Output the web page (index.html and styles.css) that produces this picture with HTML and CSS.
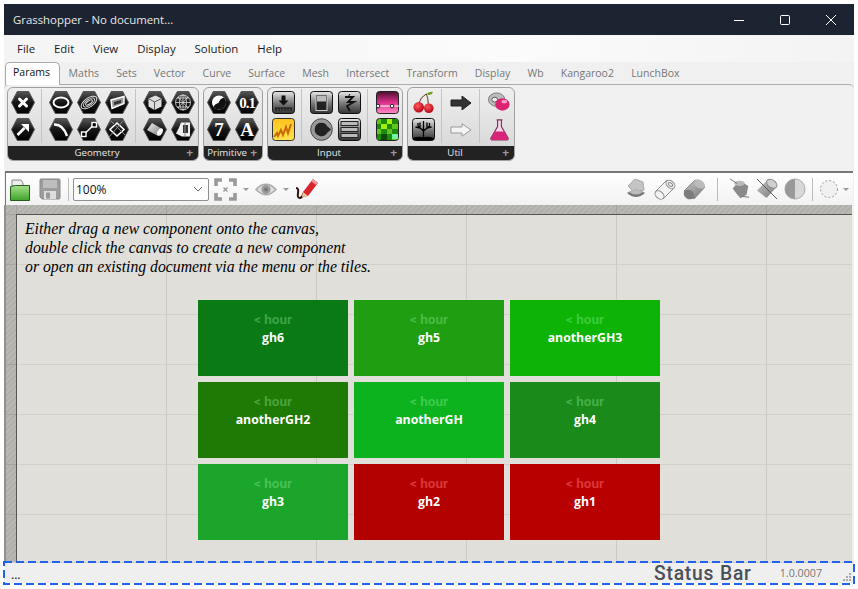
FILE: index.html
```html
<!DOCTYPE html>
<html lang="en">
<head>
  <meta charset="UTF-8">
  <title>Grasshopper - No document...</title>
  <link rel="stylesheet" href="styles.css">
</head>
<body>
  <svg class="defs" aria-hidden="true">
    <defs>
      <linearGradient id="hexFill" x1="0" y1="0" x2="0" y2="1">
        <stop offset="0" stop-color="#555"/><stop offset="0.5" stop-color="#161616"/><stop offset="1" stop-color="#000"/>
      </linearGradient>
      <linearGradient id="tileFill" x1="0" y1="0" x2="0" y2="1">
        <stop offset="0" stop-color="#e8e8e8"/><stop offset="0.55" stop-color="#777"/><stop offset="1" stop-color="#333"/>
      </linearGradient>
      <linearGradient id="pinkFill" x1="0" y1="0" x2="0" y2="1">
        <stop offset="0" stop-color="#4a1030"/><stop offset="0.5" stop-color="#e0308c"/><stop offset="1" stop-color="#ff8ac8"/>
      </linearGradient>
      <linearGradient id="yellowFill" x1="0" y1="0" x2="0" y2="1">
        <stop offset="0" stop-color="#ffc21c"/><stop offset="1" stop-color="#ffe24a"/>
      </linearGradient>
      <linearGradient id="pipeFill" x1="0" y1="0" x2="1" y2="1">
        <stop offset="0" stop-color="#eee"/><stop offset="1" stop-color="#777"/>
      </linearGradient>
      <linearGradient id="greyCyl" x1="0" y1="0" x2="1" y2="1">
        <stop offset="0" stop-color="#c8c8c8"/><stop offset="1" stop-color="#777"/>
      </linearGradient>
      <linearGradient id="folderFill" x1="0" y1="0" x2="0" y2="1">
        <stop offset="0" stop-color="#a6e08a"/><stop offset="1" stop-color="#3da12a"/>
      </linearGradient>
      <radialGradient id="cherryFill" cx="0.4" cy="0.35" r="0.7">
        <stop offset="0" stop-color="#ff5a5a"/><stop offset="1" stop-color="#b00010"/>
      </radialGradient>
      <symbol id="hex" viewBox="0 0 24 23">
        <path d="M6.3.5h11.4L23.5 11.5l-5.8 11H6.3L.5 11.5z" fill="url(#hexFill)" stroke="#555"/>
      </symbol>
      <symbol id="tile" viewBox="0 0 23 23">
        <rect x=".5" y=".5" width="22" height="22" rx="3" fill="url(#tileFill)" stroke="#111"/>
      </symbol>
    </defs>
  </svg>

  <div class="window">
    <header class="titlebar">
      <span class="title">Grasshopper - No document...</span>
      <div class="win-controls">
        <svg width="12" height="12" viewBox="0 0 12 12"><path d="M1 6.5h10" stroke="#fff"/></svg>
        <svg width="12" height="12" viewBox="0 0 12 12"><rect x="1.5" y="1.5" width="9" height="9" rx="1" fill="none" stroke="#fff"/></svg>
        <svg width="12" height="12" viewBox="0 0 12 12"><path d="M1 1l10 10M11 1L1 11" stroke="#fff"/></svg>
      </div>
    </header>

    <nav class="menubar">
      <span>File</span><span>Edit</span><span>View</span><span>Display</span><span>Solution</span><span>Help</span>
    </nav>

    <div class="tabs">
      <span class="tab active">Params</span>
      <span class="tab">Maths</span>
      <span class="tab">Sets</span>
      <span class="tab">Vector</span>
      <span class="tab">Curve</span>
      <span class="tab">Surface</span>
      <span class="tab">Mesh</span>
      <span class="tab">Intersect</span>
      <span class="tab">Transform</span>
      <span class="tab">Display</span>
      <span class="tab">Wb</span>
      <span class="tab">Kangaroo2</span>
      <span class="tab">LunchBox</span>
    </div>

    <section class="ribbon">
      <div class="panel">
        <div class="panel-body">
          <div class="group">
            <div class="cell"><svg class="hex" viewBox="0 0 24 23"><use href="#hex"/><path d="M8.5 8l7 7M15.5 8l-7 7" stroke="#fff" stroke-width="3" stroke-linecap="round"/></svg></div>
            <div class="cell"><svg class="hex" viewBox="0 0 24 23"><use href="#hex"/><path d="M6.5 17l7-7" stroke="#fff" stroke-width="2.6"/><path d="M10 6h8v8z" fill="#fff"/></svg></div>
          </div>
          <div class="group cols-3">
            <div class="cell"><svg class="hex" viewBox="0 0 24 23"><use href="#hex"/><ellipse cx="12" cy="11.5" rx="7.5" ry="5" fill="none" stroke="#fff" stroke-width="2"/></svg></div>
            <div class="cell"><svg class="hex" viewBox="0 0 24 23"><use href="#hex"/><g fill="none" stroke="#ddd" transform="rotate(-35 12 11.5)"><ellipse cx="12" cy="11.5" rx="9" ry="4.5"/><ellipse cx="12" cy="11.5" rx="6.5" ry="3"/><ellipse cx="12" cy="11.5" rx="4" ry="1.5"/></g></svg></div>
            <div class="cell"><svg class="hex" viewBox="0 0 24 23"><use href="#hex"/><path d="M6 9l13-3.5v7l-12 5z" fill="#999" stroke="#fff" stroke-width="1.4"/><path d="M9 11l7-2v3l-7 2z" fill="#333"/></svg></div>
            <div class="cell"><svg class="hex" viewBox="0 0 24 23"><use href="#hex"/><path d="M5 6.5Q14 6 18 18" fill="none" stroke="#fff" stroke-width="2.4"/></svg></div>
            <div class="cell"><svg class="hex" viewBox="0 0 24 23"><use href="#hex"/><path d="M7 16.5l10-10" stroke="#fff" stroke-width="1.4"/><rect x="4.5" y="14" width="4.5" height="4.5" fill="#000" stroke="#fff" stroke-width="1.4"/><rect x="15" y="4.5" width="4.5" height="4.5" fill="#000" stroke="#fff" stroke-width="1.4"/></svg></div>
            <div class="cell"><svg class="hex" viewBox="0 0 24 23"><use href="#hex"/><path d="M12 5l7 6.5-7 6.5-7-6.5z" fill="none" stroke="#fff" stroke-width="1.6"/><path d="M6 3l14 14M18 3L4 19" stroke="#888"/></svg></div>
          </div>
          <div class="group cols-2">
            <div class="cell"><svg class="hex" viewBox="0 0 24 23"><use href="#hex"/><path d="M5.5 7.5l7-3 6 3v8l-7 3.5-6-3.5z" fill="#ddd"/><path d="M5.5 7.5l6 3.5 7-3.5M11.5 11v8" fill="none" stroke="#555"/></svg></div>
            <div class="cell"><svg class="hex" viewBox="0 0 24 23"><use href="#hex"/><g fill="none" stroke="#ddd" stroke-width=".8"><circle cx="12" cy="11.5" r="7.5"/><ellipse cx="12" cy="11.5" rx="3.5" ry="7.5"/><path d="M4.5 11.5h15M6 7h12M6 16h12M12 4v15M7 6l10 11M17 6L7 17"/></g></svg></div>
            <div class="cell"><svg class="hex" viewBox="0 0 24 23"><use href="#hex"/><path d="M9 5l11 6.5L15 18 4 12z" fill="url(#pipeFill)"/><ellipse cx="17" cy="14" rx="2.5" ry="4" fill="#f4f4f4" transform="rotate(30 17 14)"/></svg></div>
            <div class="cell"><svg class="hex" viewBox="0 0 24 23"><use href="#hex"/><path d="M10 4.500h9v14h-8l-6-3q3-5 5-11z" fill="#eee"/><path d="M12 7h5v8h-5z" fill="#333"/><path d="M14 5v14" stroke="#888"/></svg></div>
          </div>
        </div>
        <div class="panel-foot"><span class="panel-name">Geometry</span><span class="plus">+</span></div>
      </div>

      <div class="panel">
        <div class="panel-body">
          <div class="group cols-2">
            <div class="cell"><svg class="hex" viewBox="0 0 24 23"><use href="#hex"/><circle cx="12" cy="11.5" r="7" fill="#fff"/><path d="M12.5 11c-1 3-3 5-5.500 5.500a7 7 0 0 1 10-10c.5 2-2 4-4.500 4.500z" fill="#111" transform="rotate(180 12 11.5)"/></svg></div>
            <div class="cell"><svg class="hex" viewBox="0 0 24 23"><use href="#hex"/><text x="12" y="16.5" class="hex-text small">0.1</text></svg></div>
            <div class="cell"><svg class="hex" viewBox="0 0 24 23"><use href="#hex"/><text x="12" y="18" class="hex-text">7</text></svg></div>
            <div class="cell"><svg class="hex" viewBox="0 0 24 23"><use href="#hex"/><text x="12" y="18" class="hex-text">A</text></svg></div>
          </div>
        </div>
        <div class="panel-foot"><span class="panel-name">Primitive</span><span class="plus">+</span></div>
      </div>

      <div class="panel">
        <div class="panel-body">
          <div class="group">
            <div class="cell"><svg class="tile" viewBox="0 0 23 23"><use href="#tile"/><path d="M9.5 4.500h4v5h3l-5 5-5-5h3z" fill="#111"/><path d="M3 17h17M4 17v3M7 17v3M10 17v3M13 17v3M16 17v3M19 17v3" stroke="#111"/></svg></div>
            <div class="cell"><svg class="tile" viewBox="0 0 23 23"><rect x=".5" y=".5" width="22" height="22" rx="3" fill="url(#yellowFill)" stroke="#333"/><path d="M2 19l3-4 1 3 3-6 2 5 3-8 2 6 3-9" fill="none" stroke="#c9690a" stroke-width="2"/></svg></div>
          </div>
          <div class="group cols-2">
            <div class="cell"><svg class="tile" viewBox="0 0 23 23"><use href="#tile"/><rect x="6" y="3.5" width="11" height="16" fill="#222" stroke="#ccc"/><rect x="7" y="4.5" width="9" height="6" fill="#bbb"/></svg></div>
            <div class="cell"><svg class="tile" viewBox="0 0 23 23"><use href="#tile"/><path d="M7 6h8l-5 5h6l-7 4 3 5" fill="none" stroke="#111" stroke-width="1.8"/><path d="M12 3l-2 3" stroke="#111"/></svg></div>
            <div class="cell"><svg class="tile" viewBox="0 0 24 24"><circle cx="12" cy="12" r="11.3" fill="#999" stroke="#444"/><path d="M12 5a7 7 0 1 0 6 10.500L22 12l-4-3.500A7 7 0 0 0 12 5z" fill="#222"/></svg></div>
            <div class="cell"><svg class="tile" viewBox="0 0 23 23"><use href="#tile"/><rect x="3" y="3.5" width="17" height="4" fill="#bbb" stroke="#222"/><rect x="3" y="9.5" width="17" height="4" fill="#bbb" stroke="#222"/><rect x="3" y="15.5" width="17" height="4" fill="#bbb" stroke="#222"/></svg></div>
          </div>
          <div class="group">
            <div class="cell"><svg class="tile" viewBox="0 0 23 23"><rect x=".5" y=".5" width="22" height="22" rx="3" fill="url(#pinkFill)" stroke="#222"/><path d="M0 15h23" stroke="#fff"/><circle cx="2" cy="15" r="1.8" fill="#fff" stroke="#222"/><circle cx="16" cy="15" r="1.8" fill="#fff" stroke="#222"/></svg></div>
            <div class="cell"><svg class="tile" viewBox="0 0 23 23"><rect x=".5" y=".5" width="22" height="22" rx="3" fill="#5ec51a" stroke="#222"/><path d="M5 1h6v5H5zM16 1h6v5h-6zM1 6h4v5H1zM11 6h5v5h-5zM5 11h6v5H5zM16 11h6v5h-6zM1 16h4v6H1zM11 16h5v6h-5z" fill="#1c8a0a"/><path d="M16 16h6v5h-6z" fill="#6ff7a6"/><path d="M5 16h6v6H5z" fill="#0a4c08"/><path d="M11 1h5v5h-5zM5 6h6v5H5z" fill="#a4f000"/></svg></div>
          </div>
        </div>
        <div class="panel-foot"><span class="panel-name">Input</span><span class="plus">+</span></div>
      </div>

      <div class="panel">
        <div class="panel-body">
          <div class="group">
            <div class="cell"><svg class="tile" viewBox="0 0 24 24"><path d="M7 13Q9 6 15 3M17 14Q17 8 15 3" fill="none" stroke="#5a3a10"/><path d="M15 3q4-3 7-2-2 5-7 2z" fill="#6aa020"/><circle cx="7" cy="17" r="5.5" fill="url(#cherryFill)"/><circle cx="17.5" cy="18" r="5" fill="url(#cherryFill)"/></svg></div>
            <div class="cell"><svg class="tile" viewBox="0 0 23 23"><rect x=".5" y=".5" width="22" height="22" rx="3" fill="url(#tileFill)" stroke="#111"/><path d="M1 22h21v-2q-6-2-9-1h-3q-5-1-9 1z" fill="#000"/><path d="M11.5 20v-9M11.5 13L6 8M11.5 13l6-5M8 10L3.500 9M8 10V4.500M15 10l4.500-1M15 10V4.500M11.5 11V3M6 8V5M17.5 8V5" stroke="#000" stroke-width="1.3" fill="none"/></svg></div>
          </div>
          <div class="group">
            <div class="cell"><svg class="icon" viewBox="0 0 22 14"><path d="M1 4h11V0l9 7-9 7v-4H1z" fill="#333" stroke="#222"/></svg></div>
            <div class="cell"><svg class="icon" viewBox="0 0 22 14"><path d="M1 4h11V.8L21 7l-9 6.200V10H1z" fill="#f4f4f4" stroke="#999"/></svg></div>
          </div>
          <div class="group">
            <div class="cell"><svg class="tile" viewBox="0 0 24 24"><ellipse cx="9" cy="9" rx="8.5" ry="7" fill="#bbb" stroke="#777"/><ellipse cx="7" cy="9" rx="3" ry="2.5" fill="#eee" stroke="#555"/><ellipse cx="15" cy="14" rx="7.5" ry="6.5" fill="#d9236f"/><ellipse cx="17" cy="11" rx="3" ry="2" fill="#f59cc4"/></svg></div>
            <div class="cell"><svg class="tile" viewBox="0 0 24 24"><path d="M9 2h6M10 2v7L3 21q-.5 2 2 2h14q2.500 0 2-2L14 9V2" fill="#f4d8e6" stroke="#7a3557" stroke-width="1.2"/><path d="M7 14h10l4 7q.5 2-2 2H5q-2.500 0-2-2z" fill="#d8257a"/></svg></div>
          </div>
        </div>
        <div class="panel-foot"><span class="panel-name">Util</span><span class="plus">+</span></div>
      </div>
    </section>

    <div class="toolbar">
      <svg class="tool" width="20" height="23" viewBox="0 0 20 23"><path d="M2 2h9l2 3v3H2z" fill="#eee" stroke="#888"/><path d="M.5 22.500V8.500l5-1h14v15z" fill="url(#folderFill)" stroke="#245d18"/></svg>
      <svg class="tool save" width="22" height="22" viewBox="0 0 22 22"><path d="M1 2q0-1 1-1h18q1 0 1 1v18q0 1-1 1H3l-2-2z" fill="#9c9c9c" stroke="#888"/><rect x="4" y="2" width="14" height="8" fill="#bdbdbd"/><rect x="5" y="13" width="12" height="8" fill="#ddd"/><rect x="7" y="14.5" width="4" height="6" fill="#999"/></svg>
      <span class="tool-sep"></span>
      <div class="combo"><span>100%</span><svg width="10" height="6" viewBox="0 0 10 6"><path d="M1 1l4 4 4-4" fill="none" stroke="#666"/></svg></div>
      <svg class="tool fit" width="23" height="23" viewBox="0 0 23 23"><path d="M2 8V2h6M15 2h6v6M21 15v6h-6M8 21H2v-6" fill="none" stroke="#999" stroke-width="3.6"/><path d="M9.5 9.5l4 4M13.5 9.5l-4 4" stroke="#999" stroke-width="1.4"/></svg>
      <span class="drop"></span>
      <svg class="tool" width="22" height="15" viewBox="0 0 22 15"><path d="M1 7.500Q11-3 21 7.500 11 18 1 7.500z" fill="#ddd" stroke="#aaa" stroke-width="1.5"/><circle cx="11" cy="7.5" r="4.5" fill="#9a9a9a"/><circle cx="11" cy="7.5" r="2" fill="#777"/></svg>
      <span class="drop"></span>
      <svg class="tool" width="23" height="22" viewBox="0 0 23 22"><path d="M1 10q3 0 2 5-1 5 2 5 3-1 4-6" fill="none" stroke="#331010" stroke-width="2"/><path d="M8 14L18 1l5 4-10 13-6 1z" fill="#d8262c"/><path d="M18 1l5 4-2 2-5-4z" fill="#f39a9a"/><path d="M8 14l5 4-6 1z" fill="#e8c890"/></svg>

      <div class="tool-right">
        <svg class="tool" width="20" height="23" viewBox="0 0 20 23"><path d="M2 8L9 1l8 3 1 8-9 3z" fill="#c4c4c4" stroke="#aaa"/><path d="M1 15q9-7 18 0-9 8-18 0z" fill="#777"/><path d="M3 14q7-5 14 0-7 5-14 0z" fill="#bbb"/></svg>
        <svg class="tool pipe" width="23" height="23" viewBox="0 0 23 23"><g fill="#f4f4f4" stroke="#8a8a8a"><path d="M1 14L13 2l8 7L9 21z"/><ellipse cx="16.5" cy="6.5" rx="5" ry="3.5" transform="rotate(40 16.5 6.5)"/><ellipse cx="5.5" cy="17" rx="5" ry="3.5" transform="rotate(40 5.5 17)"/><ellipse cx="16.5" cy="6.5" rx="2.5" ry="1.5" transform="rotate(40 16.5 6.5)"/></g></svg>
        <svg class="tool" width="23" height="23" viewBox="0 0 23 23"><path d="M1 13L12 2l10 7-11 12z" fill="url(#greyCyl)" stroke="#888"/><ellipse cx="16.5" cy="6" rx="6" ry="4" fill="#bbb" transform="rotate(35 16.5 6)"/><ellipse cx="6" cy="16.5" rx="5.5" ry="4.5" fill="#7c7c7c" transform="rotate(35 6 16.5)"/></svg>
        <span class="tool-sep sep-wide"></span>
        <svg class="tool" width="20" height="22" viewBox="0 0 23 23"><path d="M3 11l8-9 10 6-2 10-7 4q-4-4-9-11z" fill="#8a8a8a"/><ellipse cx="11" cy="5" rx="6" ry="3" fill="#bbb"/><path d="M0 0l8 5M14 20l8 1" stroke="#666"/></svg>
        <svg class="tool" width="22" height="22" viewBox="0 0 23 23"><path d="M1 13L12 2l10 7-11 12z" fill="url(#greyCyl)"/><ellipse cx="16.5" cy="6" rx="6" ry="4" fill="#d0d0d0" stroke="#888" transform="rotate(35 16.5 6)"/><path d="M1 1l21 21" stroke="#555"/></svg>
        <svg class="tool" width="22" height="22" viewBox="0 0 23 23"><circle cx="11.5" cy="11.5" r="10.5" fill="#d8d8d8" stroke="#aaa"/><path d="M11.5 1a10.500 10.500 0 0 0 0 21z" fill="#999"/></svg>
        <span class="tool-sep"></span>
        <svg class="tool" width="20" height="20" viewBox="0 0 20 20"><circle cx="10" cy="10" r="8.5" fill="#f0f0f0" stroke="#999" stroke-dasharray="2 2"/></svg>
        <span class="drop"></span>
      </div>
    </div>

    <main class="canvas-frame">
      <div class="canvas">
        <p class="hint">
          Either drag a new component onto the canvas,<br>
          double click the canvas to create a new component<br>
          or open an existing document via the menu or the tiles.
        </p>
        <div class="tiles">
          <div class="doc doc-a"><span class="age">&lt; hour</span><span class="name">gh6</span></div>
          <div class="doc doc-b"><span class="age">&lt; hour</span><span class="name">gh5</span></div>
          <div class="doc doc-c"><span class="age">&lt; hour</span><span class="name">anotherGH3</span></div>
          <div class="doc doc-d"><span class="age">&lt; hour</span><span class="name">anotherGH2</span></div>
          <div class="doc doc-e"><span class="age">&lt; hour</span><span class="name">anotherGH</span></div>
          <div class="doc doc-f"><span class="age">&lt; hour</span><span class="name">gh4</span></div>
          <div class="doc doc-g"><span class="age">&lt; hour</span><span class="name">gh3</span></div>
          <div class="doc doc-h"><span class="age">&lt; hour</span><span class="name">gh2</span></div>
          <div class="doc doc-i"><span class="age">&lt; hour</span><span class="name">gh1</span></div>
        </div>
      </div>
    </main>

    <footer class="statusbar">
      <span class="status-dots">...</span>
      <span class="status-label">Status Bar</span>
      <span class="status-version">1.0.0007</span>
      <svg class="grip" width="10" height="10" viewBox="0 0 10 10"><path d="M7 1h2v2H7zM4 4h2v2H4zM7 4h2v2H7zM1 7h2v2H1zM4 7h2v2H4zM7 7h2v2H7z" fill="#aaa"/></svg>
      <svg class="status-outline" width="852" height="24" viewBox="0 0 852 24"><rect x="1" y="1" width="850" height="22" fill="none" stroke="#1f63ee" stroke-width="2" stroke-dasharray="8 4"/></svg>
    </footer>
  </div>
</body>
</html>
```

FILE: styles.css
```css
html, body {
  margin: 0;
  height: 100%;
  overflow: hidden;
}

body {
  background: #fff;
  font-family: "Open Sans", "Noto Sans", sans-serif;
  font-size: 11.4px;
  color: #111;
}

.defs {
  display: block;
  width: 0;
  height: 0;
}

.window {
  display: flex;
  flex-direction: column;
  width: 850px;
  height: 579px;
  margin: 4px 0 0 4px;
  background: #f0f0f0;
}

/* title bar */
.titlebar {
  display: flex;
  align-items: center;
  justify-content: space-between;
  flex: none;
  height: 31px;
  padding-left: 9px;
  background: #1c2431;
  color: #e8e8e8;
}

.win-controls {
  display: flex;
  gap: 34px;
  margin-right: 17px;
}

/* menu */
.menubar {
  display: flex;
  align-items: center;
  gap: 19px;
  flex: none;
  height: 27px;
  padding-left: 13px;
  background: linear-gradient(to right, #f4f4f4, #fbfbfb 60%, #f3f3f3);
  color: #1a1a1a;
}

/* tabs */
.tabs {
  display: flex;
  flex: none;
  height: 22px;
  padding-left: 1px;
  color: #777;
  font-size: 10.5px;
}

.tab {
  padding: 4px 8.6px 0;
}

.tab.active {
  position: relative;
  z-index: 1;
  box-sizing: border-box;
  height: 23px;
  padding: 2px 9px 0 7px;
  background: #fff;
  border: 1px solid #aaa;
  border-bottom: none;
  border-radius: 5px 5px 0 0;
  color: #111;
}

/* ribbon */
.ribbon {
  display: flex;
  align-items: flex-start;
  gap: 4px;
  flex: none;
  box-sizing: border-box;
  height: 87px;
  padding: 2px 0 0 3px;
  border-top: 1px solid #aaa;
  border-radius: 5px 5px 0 0;
}

.panel {
  border: 1px solid #a0a0a0;
  border-radius: 6px;
  background: linear-gradient(#efefef, #d4d4d4);
  overflow: hidden;
}

.panel-body {
  display: flex;
  padding: 1px 1px 3px 1px;
}

.group {
  display: grid;
  grid-template-columns: 28px;
  grid-auto-rows: 27px;
}

.group.cols-2 {
  grid-template-columns: repeat(2, 28px);
}

.group.cols-3 {
  grid-template-columns: repeat(3, 28px);
}

.group + .group {
  margin-left: 4px;
  padding-left: 5px;
  border-left: 1px solid #c4c4c4;
}

.cell {
  display: flex;
  align-items: center;
  justify-content: center;
}

.hex {
  width: 24px;
  height: 23px;
}

.tile {
  width: 23px;
  height: 23px;
}

.icon {
  width: 22px;
  height: 14px;
}

.hex-text {
  fill: #fff;
  font-family: "Liberation Serif", serif;
  font-weight: bold;
  font-size: 19px;
  text-anchor: middle;
}

.hex-text.small {
  font-size: 15px;
  letter-spacing: -1px;
}

.panel-foot {
  display: flex;
  align-items: center;
  height: 13px;
  padding: 0 5px 1px 0;
  background: #222;
  color: #e8e8e8;
  font-size: 9.7px;
  line-height: 13px;
}

.panel-name {
  flex: 1;
  text-align: center;
}

.plus {
  color: #999;
  font-weight: bold;
  font-size: 12px;
}

/* toolbar */
.toolbar {
  display: flex;
  align-items: center;
  flex: none;
  box-sizing: border-box;
  height: 34px;
  margin: 0 1px;
  padding-left: 4px;
  border-top: 2px solid #777;
  border-left: 1px solid #777;
  background: linear-gradient(#fff, #f2f2f2);
}

.tool {
  flex: none;
}

.save {
  margin-left: 9px;
}

.tool-sep {
  flex: none;
  width: 1px;
  height: 23px;
  margin: 0 4px 0 7px;
  background: #bbb;
}

.combo {
  display: flex;
  align-items: center;
  justify-content: space-between;
  box-sizing: border-box;
  width: 136px;
  height: 23px;
  padding: 0 5px 0 2px;
  border: 1px solid #8f8f8f;
  border-radius: 2px;
  background: #fff;
  font-size: 12px;
}

.fit {
  margin-left: 5px;
}

.drop {
  flex: none;
  width: 0;
  height: 0;
  margin: 0 6px;
  border: 3px solid transparent;
  border-top: 3px solid #999;
  border-bottom: none;
}

.tool-right {
  display: flex;
  align-items: center;
  gap: 6px;
  margin-left: auto;
  padding-right: 4px;
}

.tool-right .pipe {
  margin-left: 2px;
}

.tool-right .tool-sep {
  margin: 0;
}

.tool-right .sep-wide {
  margin: 0 6px 0 5px;
}

.tool-right .drop {
  margin: 0 0 0 -2px;
}

/* canvas */
.canvas-frame {
  flex: 1;
  min-height: 0;
  margin-right: 2px;
  padding: 9px 0 0 10px;
  border-left: 2px solid #8f8f8f;
  background-color: #b6b5af;
  background-image:
    linear-gradient(to right, #a5a49e 1px, transparent 1px),
    linear-gradient(to bottom, #a5a49e 1px, transparent 1px),
    repeating-linear-gradient(135deg, #b9b8b2 0 2px, #b0afa9 2px 4px);
  background-size: 150px 100%, 100% 50px, auto;
  background-position: 10px 0, 0 9px, 0 0;
  background-repeat: repeat-x, repeat-y, repeat;
}

.canvas {
  box-sizing: border-box;
  height: 100%;
  padding: 4px 0 0 8px;
  border-top: 1px solid #555;
  border-left: 1px solid #555;
  background-color: #e0dfda;
  background-image:
    linear-gradient(to right, #cbcac5 1px, transparent 1px),
    linear-gradient(to bottom, #d0cfca 1px, transparent 1px);
  background-size: 150px 100%, 100% 50px;
  background-position: 149px 0, 0 49px;
  background-repeat: repeat-x, repeat-y;
}

.hint {
  margin: 0;
  font-family: "Liberation Serif", serif;
  font-style: italic;
  font-size: 15.75px;
  line-height: 19px;
  color: #000;
}

.tiles {
  display: grid;
  grid-template-columns: repeat(3, 150px);
  grid-auto-rows: 76px;
  gap: 6px;
  margin: 24px 0 0 173px;
}

.doc {
  display: flex;
  flex-direction: column;
  align-items: center;
  box-sizing: border-box;
  padding-top: 11px;
  color: #fff;
  font-weight: bold;
}

.age {
  font-family: Roboto, sans-serif;
  font-size: 13.5px;
  font-weight: 700;
  line-height: 17px;
  color: rgba(170, 255, 180, 0.33);
}

.name {
  font-size: 12.3px;
  line-height: 19px;
}

.doc-a { background: #0a7a14; }
.doc-b { background: #1f9e12; }
.doc-c { background: #0db305; }
.doc-d { background: #1f7a05; }
.doc-e { background: #0db31e; }
.doc-f { background: #1a8a1a; }
.doc-g { background: #1ba52b; }
.doc-h { background: #b30000; }
.doc-i { background: #b80000; }

.doc-h .age,
.doc-i .age {
  color: rgba(255, 110, 110, 0.5);
}

/* status bar */
.statusbar {
  position: relative;
  display: flex;
  align-items: center;
  flex: none;
  box-sizing: border-box;
  height: 21px;
  padding: 0 2px 0 7px;
  border-top: 1px solid #ccc;
  background: #efefef;
}

.status-dots {
  margin-top: 3px;
  font-size: 12px;
}

.status-label {
  margin-left: auto;
  font-family: Roboto, sans-serif;
  font-size: 19.3px;
  font-weight: 500;
  letter-spacing: 0.8px;
  color: #495057;
}

.status-version {
  margin-left: 28px;
  font-size: 10.7px;
  color: #777;
}

.grip {
  margin: 8px 0 0 20px;
}

.status-outline {
  position: absolute;
  left: -1px;
  top: -2px;
}
```
